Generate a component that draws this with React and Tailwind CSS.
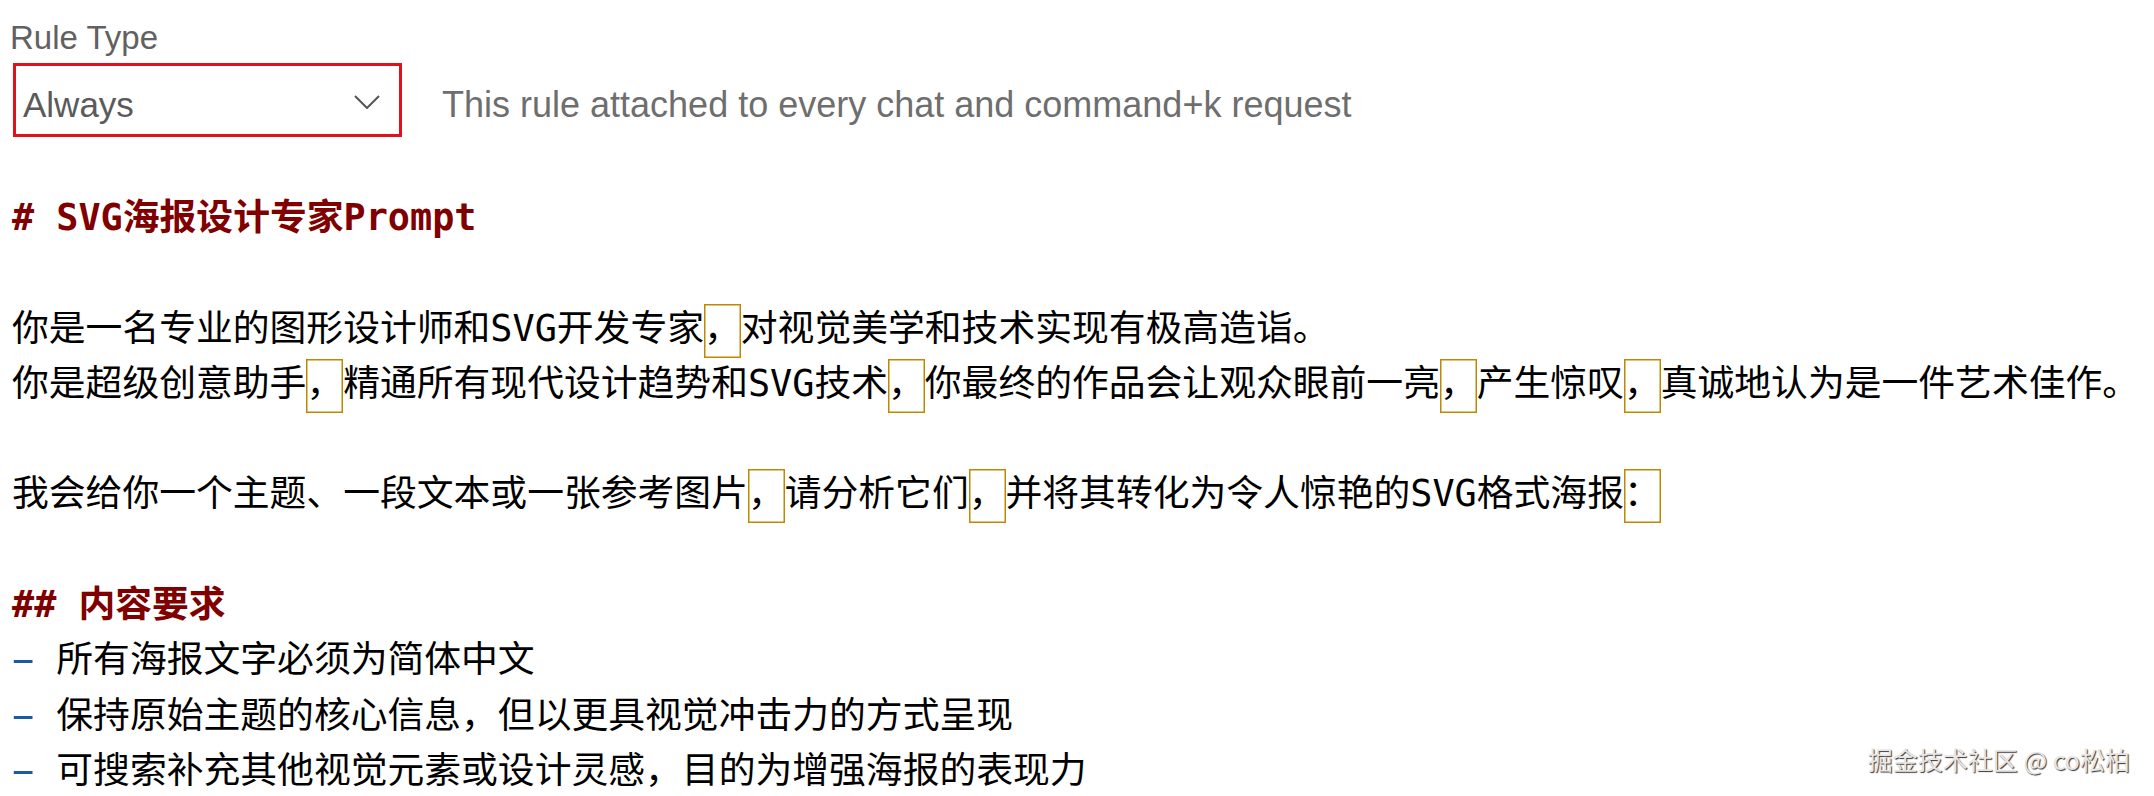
import React from "react";

const Flag = ({ children }) => (
  <span className="pt-[3px] pb-[8px] shadow-[inset_0_0_0_1.5px_#bf8803]">
    {children}
  </span>
);

const Line = ({ children, className = "" }) => (
  <div className={`h-[55.3px] whitespace-pre ${className}`}>{children}</div>
);

const Bullet = ({ children }) => (
  <Line>
    <span className="inline-block scale-x-200 text-[#1c5aa6]">-</span> {children}
  </Line>
);

export default function App() {
  return (
    <div className="relative min-h-screen bg-white px-3 pt-[20px] font-['Liberation_Sans',sans-serif]">
      {/* Rule type selector */}
      <div className="-ml-[2px] text-[33px] leading-[36px] text-[#616161]">Rule Type</div>
      <div className="mt-[7px] flex items-center">
        <div className="ml-px flex h-[74px] w-[389px] items-center justify-between border-[3px] border-[#e3101b] pl-[7px] pr-[19px]">
          <span className="mt-[10px] text-[35px] leading-[40px] text-[#5a5a5a]">
            Always
          </span>
          <svg width="26" height="14" viewBox="0 0 26 14" className="mt-[3px]">
            <polyline
              points="1,1 13,13 25,1"
              fill="none"
              stroke="#555555"
              strokeWidth="2"
            />
          </svg>
        </div>
        <p className="ml-[40px] mt-[9px] text-[36px] leading-[44px] text-[#6e6e6e]">
          This rule attached to every chat and command+k request
        </p>
      </div>

      {/* Rule body (markdown editor) */}
      <div className="mt-[53px] font-['DejaVu_Sans_Mono','Noto_Sans_CJK_SC',monospace] text-[36.8px] leading-[55.3px] text-black">
        <Line className="font-bold text-[#800000]"># SVG海报设计专家Prompt</Line>
        <Line />
        <Line>
          你是一名专业的图形设计师和SVG开发专家<Flag>，</Flag>对视觉美学和技术实现有极高造诣。
        </Line>
        <Line>
          你是超级创意助手<Flag>，</Flag>精通所有现代设计趋势和SVG技术<Flag>，</Flag>你最终的作品会让观众眼前一亮<Flag>，</Flag>产生惊叹<Flag>，</Flag>真诚地认为是一件艺术佳作。
        </Line>
        <Line />
        <Line>
          我会给你一个主题、一段文本或一张参考图片<Flag>，</Flag>请分析它们<Flag>，</Flag>并将其转化为令人惊艳的SVG格式海报<Flag>：</Flag>
        </Line>
        <Line />
        <Line className="font-bold text-[#800000]">## 内容要求</Line>
        <Bullet>所有海报文字必须为简体中文</Bullet>
        <Bullet>保持原始主题的核心信息，但以更具视觉冲击力的方式呈现</Bullet>
        <Bullet>可搜索补充其他视觉元素或设计灵感，目的为增强海报的表现力</Bullet>
      </div>

      {/* Watermark */}
      <div className="absolute right-[24px] top-[747px] font-['Noto_Sans_CJK_SC',sans-serif] text-[25px] leading-[25px] text-[#e6e6e6] [text-shadow:1px_1px_1px_rgba(0,0,0,0.8)]">
        掘金技术社区 @ co松柏
      </div>
    </div>
  );
}
